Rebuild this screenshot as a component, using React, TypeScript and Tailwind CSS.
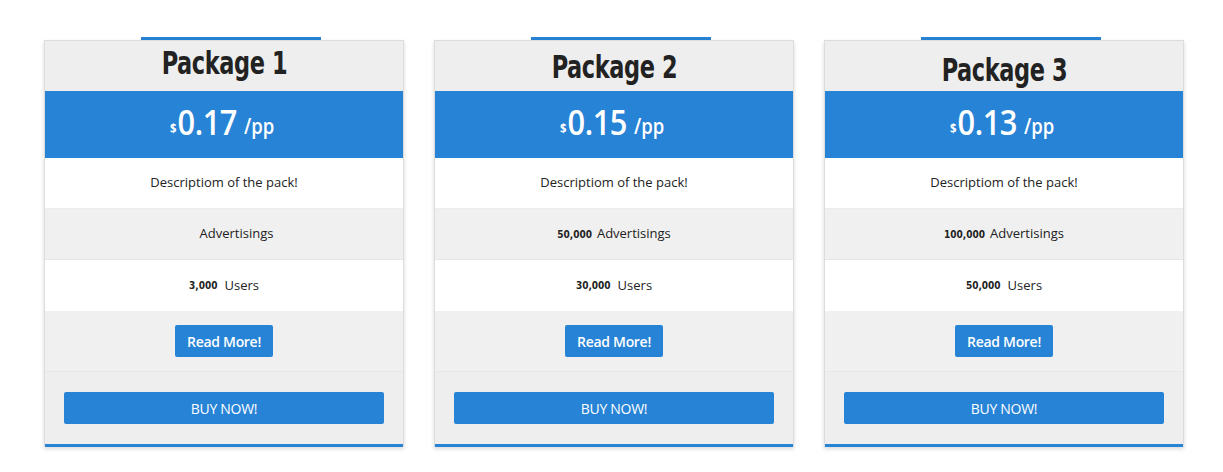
import React from "react";

const cards = [
  { title: "Package 1", price: "0.17", adv: "", users: "3,000", pt: "pt-[4px]" },
  { title: "Package 2", price: "0.15", adv: "50,000", users: "30,000", pt: "pt-[8px]" },
  { title: "Package 3", price: "0.13", adv: "100,000", users: "50,000", pt: "pt-[11px]" },
];

const body = { fontFamily: '"Open Sans", "Liberation Sans", sans-serif' };
const cond = { fontFamily: '"DejaVu Sans Condensed", "DejaVu Sans", sans-serif' };

export default function App() {
  return (
    <div className="w-[1223px] h-[472px] bg-white pl-[44px] pt-[37px] flex gap-[30px]" style={body}>
      {cards.map((c) => (
        <div key={c.title} className="w-[360px] flex flex-col">
          <div className="h-[3px] w-[180px] ml-[97px] bg-[#2783d5]" />
          <div className="border border-[#dcdcdc] border-b-0 shadow-[0_2px_4px_rgba(0,0,0,0.15)] flex flex-col">
            <div className={`h-[50px] bg-[#eeeeee] text-center ${c.pt}`}>
              <div
                className="inline-block scale-x-[0.78] text-[32px] leading-[36px] font-bold text-[#222] tracking-[-0.5px]"
                style={cond}
              >
                {c.title}
              </div>
            </div>
            <div className="h-[67px] bg-[#2783d5] text-white flex items-center justify-center pb-[6px]">
              <div className="flex items-end scale-x-[0.88] ml-[-4px]">
                <span className="text-[13px] font-bold leading-none mb-[2px] mr-[1px]">$</span>
                <span className="text-[35px] font-semibold tracking-[-0.5px] leading-[30px]">{c.price}</span>
                <span className="text-[21px] font-semibold ml-[8px] leading-[22px]">/pp</span>
              </div>
            </div>
            <div className="h-[51px] bg-white border-b border-[#ececec] flex items-center justify-center text-[13px] text-[#222]">
              Descriptiom of the pack!
            </div>
            <div className="h-[51px] bg-[#f0f0f0] border-b border-[#e6e6e6] flex items-center justify-center text-[13px] text-[#222]">
              {c.adv && (
                <span className="text-[10px] font-bold mr-[5px] text-[#222]" style={cond}>
                  {c.adv}
                </span>
              )}
              {c.adv ? "Advertisings" : <span className="ml-[25px]">Advertisings</span>}
            </div>
            <div className="h-[51px] bg-white flex items-center justify-center text-[13px] text-[#222]">
              <span className="text-[10px] font-bold mr-[7px] text-[#222]" style={cond}>
                {c.users}
              </span>
              Users
            </div>
            <div className="h-[61px] bg-[#f0f0f0] border-b border-[#e8e8e8] flex items-center justify-center">
              <button className="h-[32px] px-[12px] rounded-[2px] bg-[#2783d5] text-white text-[14px] font-semibold tracking-[-0.3px]">
                Read More!
              </button>
            </div>
            <div className="h-[72px] bg-[#eeeeee] flex items-center justify-center">
              <button className="h-[32px] w-[320px] rounded-[2px] bg-[#2783d5] text-white text-[14px] font-medium tracking-[-0.3px]">
                BUY NOW!
              </button>
            </div>
            <div className="h-[3px] bg-[#2783d5]" />
          </div>
        </div>
      ))}
    </div>
  );
}
